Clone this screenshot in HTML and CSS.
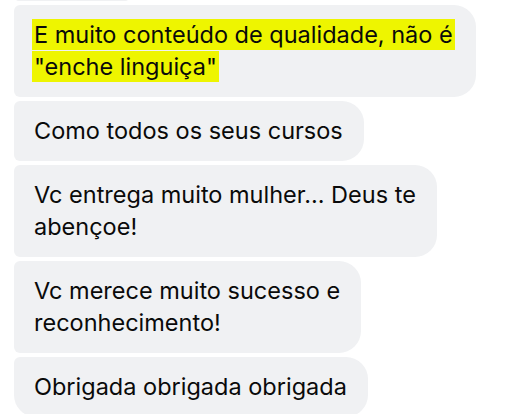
FILE: index.html
```html
<!DOCTYPE html>
<html lang="pt">
<head>
<meta charset="utf-8">
<link rel="stylesheet" href="styles.css">
</head>
<body>
<div class="thread">
  <div class="bubble bubble-prev"></div>
  <div class="bubble bubble-first"><span class="hl">E muito conteúdo de qualidade, não é</span><br><span class="hl">"enche linguiça"</span></div>
  <div class="bubble">Como todos os seus cursos</div>
  <div class="bubble">Vc entrega muito mulher... Deus te<br>abençoe!</div>
  <div class="bubble">Vc merece muito sucesso e<br>reconhecimento!</div>
  <div class="bubble bubble-last">Obrigada obrigada obrigada</div>
</div>
</body>
</html>
```
FILE: styles.css
```css
html, body {
  margin: 0;
  padding: 0;
  background: #ffffff;
  width: 512px;
  height: 414px;
  overflow: hidden;
}

.thread {
  display: flex;
  flex-direction: column;
  align-items: flex-start;
  gap: 4px;
  padding-left: 14px;
  margin-top: -3px;
}

.bubble {
  background: #f0f1f3;
  color: #0a0a0a;
  font-family: Inter, "Liberation Sans", sans-serif;
  font-size: 23.5px;
  line-height: 32px;
  padding: 14px 21px 14px 20px;
  border-radius: 6px 22px 22px 6px;
  white-space: nowrap;
}

.bubble-prev {
  width: 114px;
  height: 4px;
  padding: 0;
  margin-left: 1px;
  border-radius: 0 0 8px 8px;
}

.bubble-first {
  padding-right: 23px;
}

.bubble-last {
  border-radius: 6px 22px 22px 22px;
}

.hl {
  background: #eef500;
  padding: 1px 2px;
  margin: 0 -2px;
}
```
